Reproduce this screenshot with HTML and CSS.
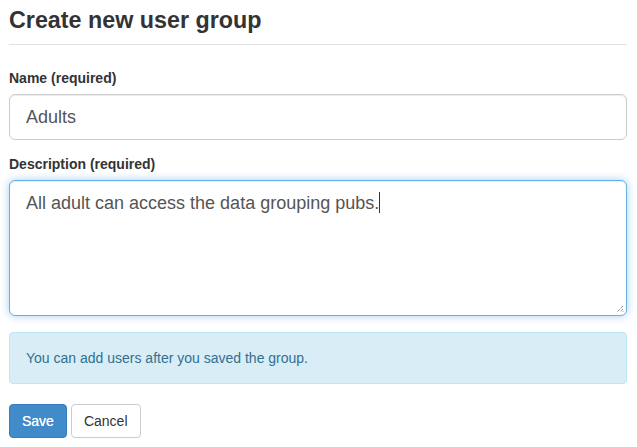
FILE: index.html
```html
<!DOCTYPE html>
<html>
<head>
<meta charset="utf-8">
<link rel="stylesheet" href="styles.css">
</head>
<body>
<div class="page">
  <div class="page-header">
    <h3 class="title">Create new user group</h3>
  </div>
  <div class="form-group">
    <label class="label">Name (required)</label>
    <div class="input input-lg">Adults</div>
  </div>
  <div class="form-group form-group-last">
    <label class="label">Description (required)</label>
    <div class="input input-lg textarea focused">All adult can access the data grouping pubs.<span class="caret"></span>
      <svg class="grip" width="8" height="8" viewBox="0 0 8 8"><path d="M7 1L1 7M7 4L4 7M7 6.5L6.5 7" stroke="#555" stroke-width="1" stroke-dasharray="1 1"/></svg>
    </div>
  </div>
  <div class="alert">You can add users after you saved the group.</div>
  <div class="actions">
    <button class="btn btn-primary">Save</button>
    <button class="btn btn-default">Cancel</button>
  </div>
</div>
</body>
</html>
```
FILE: styles.css
```css
html, body {
  margin: 0;
  padding: 0;
  background: #fff;
}
body {
  font-family: "Liberation Sans", Arial, sans-serif;
  font-size: 14px;
  line-height: 20px;
  color: #333;
}
.page {
  padding: 5px 10px 0 9px;
}
.page-header {
  border-bottom: 1px solid #e1e1e1;
  padding-bottom: 9px;
  margin-bottom: 23px;
}
.title {
  margin: 0;
  font-size: 23.3px;
  line-height: 30px;
  font-weight: bold;
  color: #333;
}
.form-group {
  margin-bottom: 14px;
}
.form-group-last {
  margin-bottom: 16px;
}
.label {
  display: block;
  font-weight: bold;
  font-size: 14px;
  line-height: 20px;
  margin-bottom: 6px;
}
.input {
  box-sizing: border-box;
  border: 1px solid #ccc;
  border-radius: 6px;
  background: #fff;
  color: #555;
  box-shadow: inset 0 1px 1px rgba(0,0,0,.075);
}
.input-lg {
  height: 46px;
  padding: 10px 16px;
  font-size: 18px;
  line-height: 24px;
}
.textarea {
  position: relative;
  height: 136px;
  padding: 10px 16px;
}
.focused {
  border-color: #66afe9;
  box-shadow: inset 0 1px 1px rgba(0,0,0,.075), 0 0 8px rgba(102,175,233,.6);
}
.caret {
  display: inline-block;
  width: 1px;
  height: 21px;
  background: #333;
  vertical-align: -4px;
}
.grip {
  position: absolute;
  right: 2px;
  bottom: 2px;
}
.alert {
  background: #d9edf7;
  border: 1px solid #bce8f1;
  border-radius: 4px;
  color: #31708f;
  padding: 15px 16px;
  margin-bottom: 20px;
}
.actions {
  display: flex;
  gap: 4px;
}
.btn {
  font-family: "Liberation Sans", Arial, sans-serif;
  font-size: 14px;
  line-height: 20px;
  padding: 6px 12px;
  border-radius: 4px;
  border: 1px solid transparent;
  height: 34px;
}
.btn-primary {
  background: #428bca;
  border-color: #357ebd;
  color: #fff;
  font-weight: normal;
  text-shadow: 0 0 0.4px #fff;
}
.btn-default {
  background: #fff;
  border-color: #ccc;
  color: #333;
}
```
